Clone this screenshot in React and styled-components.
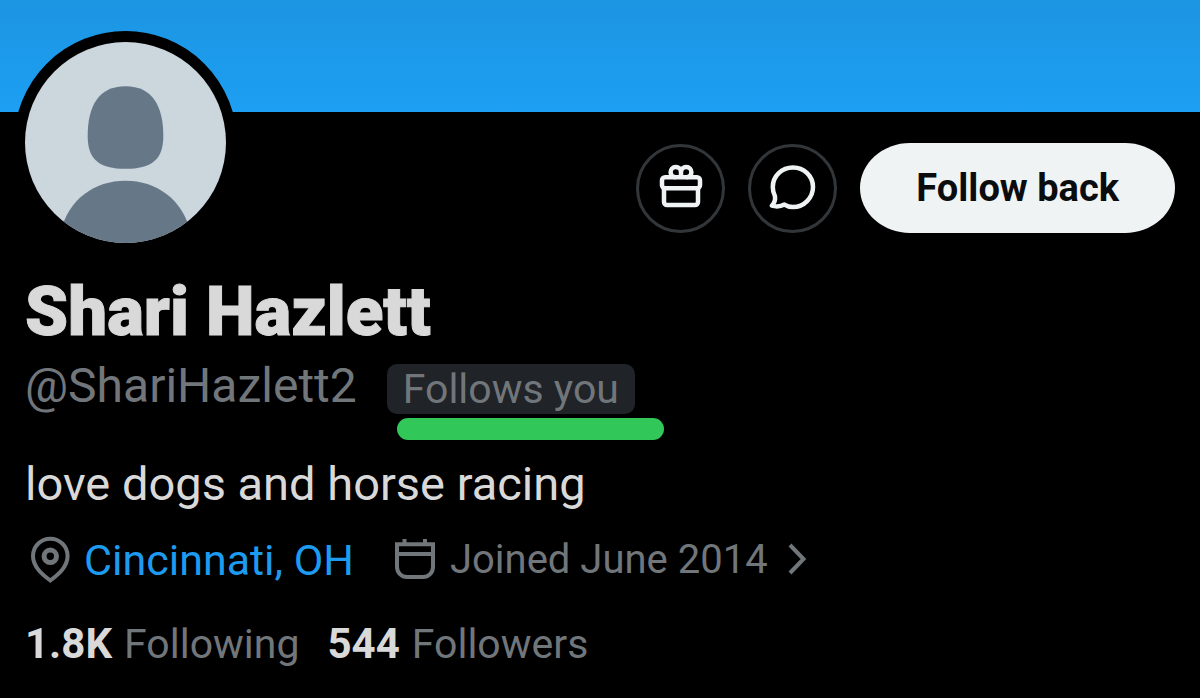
import React from "react";
import styled, { createGlobalStyle } from "styled-components";

const GlobalStyle = createGlobalStyle`
  * { box-sizing: border-box; }
  body {
    margin: 0;
    background: #000;
    color: #d9d9d9;
    font-family: Roboto, "Liberation Sans", sans-serif;
  }
`;

const Banner = styled.div`
  height: 112px;
  background: linear-gradient(#1c95e2, #1d9ff3);
`;

const Profile = styled.main`
  padding: 0 25px 24px;
`;

const Header = styled.header`
  display: flex;
  justify-content: space-between;
  align-items: flex-end;
  margin-top: -81px;
`;

const Avatar = styled.div`
  width: 223px;
  height: 223px;
  margin-left: -11px;
  border: 11px solid #000;
  border-radius: 50%;
  background: #000;

  svg {
    display: block;
    width: 100%;
    height: 100%;
  }
`;

const Actions = styled.div`
  display: flex;
  align-items: center;
  gap: 23px;
  margin-bottom: 21px;
`;

const IconButton = styled.button`
  display: grid;
  place-items: center;
  width: 89px;
  height: 89px;
  padding: 0;
  border: 3px solid #333639;
  border-radius: 50%;
  background: transparent;
  color: #eff3f4;
`;

const FollowButton = styled.button`
  height: 90px;
  padding: 0 56px;
  border: 0;
  border-radius: 50px / 45px;
  background: #eff3f4;
  color: #0a0c0e;
  font: 700 38px/44px Roboto, "Liberation Sans", sans-serif;
`;

const Name = styled.h1`
  margin: 22px 0 0;
  font-size: 69px;
  line-height: 72px;
  font-weight: 900;
  -webkit-text-stroke: 1px currentColor;
`;

const HandleRow = styled.div`
  display: flex;
  align-items: flex-end;
  gap: 30px;
  margin-top: 10px;
`;

const Handle = styled.span`
  color: #71767b;
  font-size: 48px;
  line-height: 56px;
`;

const Badge = styled.span`
  position: relative;
  padding: 0 16px;
  border-radius: 10px;
  background: #202327;
  color: #71767b;
  font-size: 41px;
  line-height: 50px;
`;

const Highlight = styled.span`
  position: absolute;
  top: 54px;
  left: 10px;
  width: 267px;
  height: 22px;
  border-radius: 11px;
  background: #32c759;
`;

const Bio = styled.p`
  margin: 42px 0 0;
  font-size: 47px;
  line-height: 56px;
`;

const Meta = styled.div`
  display: flex;
  align-items: center;
  gap: 40px;
  margin-top: 20px;
  padding-left: 5px;
  color: #71767b;
  line-height: 56px;
`;

const MetaItem = styled.span`
  display: flex;
  align-items: center;
  gap: 14px;
  font-size: 43px;
`;

const JoinedButton = styled.button`
  display: flex;
  align-items: center;
  gap: 14px;
  padding: 0;
  border: 0;
  background: none;
  color: inherit;
  font: inherit;
  font-size: 40px;
`;

const JoinedText = styled.span`
  margin-right: 6px;
`;

const PlaceLink = styled.a`
  color: #1d9bf0;
  text-decoration: none;
`;

const Stats = styled.div`
  display: flex;
  gap: 28px;
  margin-top: 28px;
  font-size: 41px;
  line-height: 56px;
`;

const StatLink = styled.a`
  display: flex;
  gap: 12px;
  color: #71767b;
  text-decoration: none;

  strong {
    color: #d9d9d9;
    font-size: 42px;
    font-weight: 700;
  }
`;

const Stroke = ({ w, h, weight = 4, children }) => (
  <svg
    width={w}
    height={h}
    viewBox={`0 0 ${w} ${h}`}
    fill="none"
    stroke="currentColor"
    strokeWidth={weight}
    aria-hidden="true"
  >
    {children}
  </svg>
);

const GiftIcon = () => (
  <Stroke w={48} h={48} weight={4.5}>
    <rect x="5" y="13.3" width="38" height="11" rx="3" />
    <path d="M7 24.3V38a3 3 0 0 0 3 3h28a3 3 0 0 0 3-3V24.3" />
    <path d="M24 13.3V8a5.2 5.2 0 1 0-5.2 5.3M24 8a5.2 5.2 0 1 1 5.2 5.3" />
  </Stroke>
);

const ChatIcon = () => (
  <Stroke w={48} h={48} weight={4.5}>
    <path
      strokeLinejoin="round"
      d="M24 3.500C35 3.500 44 12.200 44 23s-9 20-20 20c-3.200 0-6.200-.8-8.600-2.400C12 42.400 7.500 43 2.800 41.700 5.400 39 6.600 35.800 5.900 32 4.500 29.500 3.800 26.500 3.800 23 3.800 12.200 12.800 3.500 24 3.500Z"
    />
  </Stroke>
);

const PinIcon = () => (
  <Stroke w={40} h={48}>
    <path d="M20.300 2.700C10.700 2.700 3 10.400 3 20c0 11 9.600 18.600 17.300 24.500C28 38.600 37.600 31 37.600 20 37.600 10.400 29.900 2.700 20.300 2.700Z" />
    <circle cx="20.300" cy="20.300" r="6.200" strokeWidth="5" />
  </Stroke>
);

const CalendarIcon = () => (
  <Stroke w={42} h={42}>
    <path d="M3 5.300H39V28a10 10 0 0 1-10 10H13a10 10 0 0 1-10-10ZM3 15H39M10.500 0V5M31 0V5" />
  </Stroke>
);

const ChevronIcon = () => (
  <Stroke w={20} h={34}>
    <path d="M2 2L15.500 16 2 30" />
  </Stroke>
);

const AvatarPicture = () => (
  <svg viewBox="0 0 202 202" role="img" aria-label="Default avatar">
    <defs>
      <clipPath id="disc">
        <circle cx="101" cy="101" r="101" />
      </clipPath>
    </defs>
    <g clipPath="url(#disc)">
      <rect width="202" height="202" fill="#cbd6dd" />
      <g fill="#667787">
        <path d="M101 44.500c27 0 38 20 38 50c0 24-12 33-38 33s-38-9-38-33c0-30 11-50 38-50Z" />
        <path d="M36 190C44 158 70 139.500 101 139.500S158 158 166 190V202H36Z" />
      </g>
    </g>
  </svg>
);

export default function App() {
  return (
    <>
      <GlobalStyle />
      <Banner />
      <Profile>
        <Header>
          <Avatar>
            <AvatarPicture />
          </Avatar>
          <Actions>
            <IconButton aria-label="Gift">
              <GiftIcon />
            </IconButton>
            <IconButton aria-label="Message">
              <ChatIcon />
            </IconButton>
            <FollowButton>Follow back</FollowButton>
          </Actions>
        </Header>
        <Name>Shari Hazlett</Name>
        <HandleRow>
          <Handle>@ShariHazlett2</Handle>
          <Badge>
            Follows you
            <Highlight />
          </Badge>
        </HandleRow>
        <Bio>love dogs and horse racing</Bio>
        <Meta>
          <MetaItem>
            <PinIcon />
            <PlaceLink href="#location">Cincinnati, OH</PlaceLink>
          </MetaItem>
          <JoinedButton>
            <CalendarIcon />
            <JoinedText>Joined June 2014</JoinedText>
            <ChevronIcon />
          </JoinedButton>
        </Meta>
        <Stats>
          <StatLink href="#following">
            <strong>1.8K</strong>Following
          </StatLink>
          <StatLink href="#followers">
            <strong>544</strong>Followers
          </StatLink>
        </Stats>
      </Profile>
    </>
  );
}
